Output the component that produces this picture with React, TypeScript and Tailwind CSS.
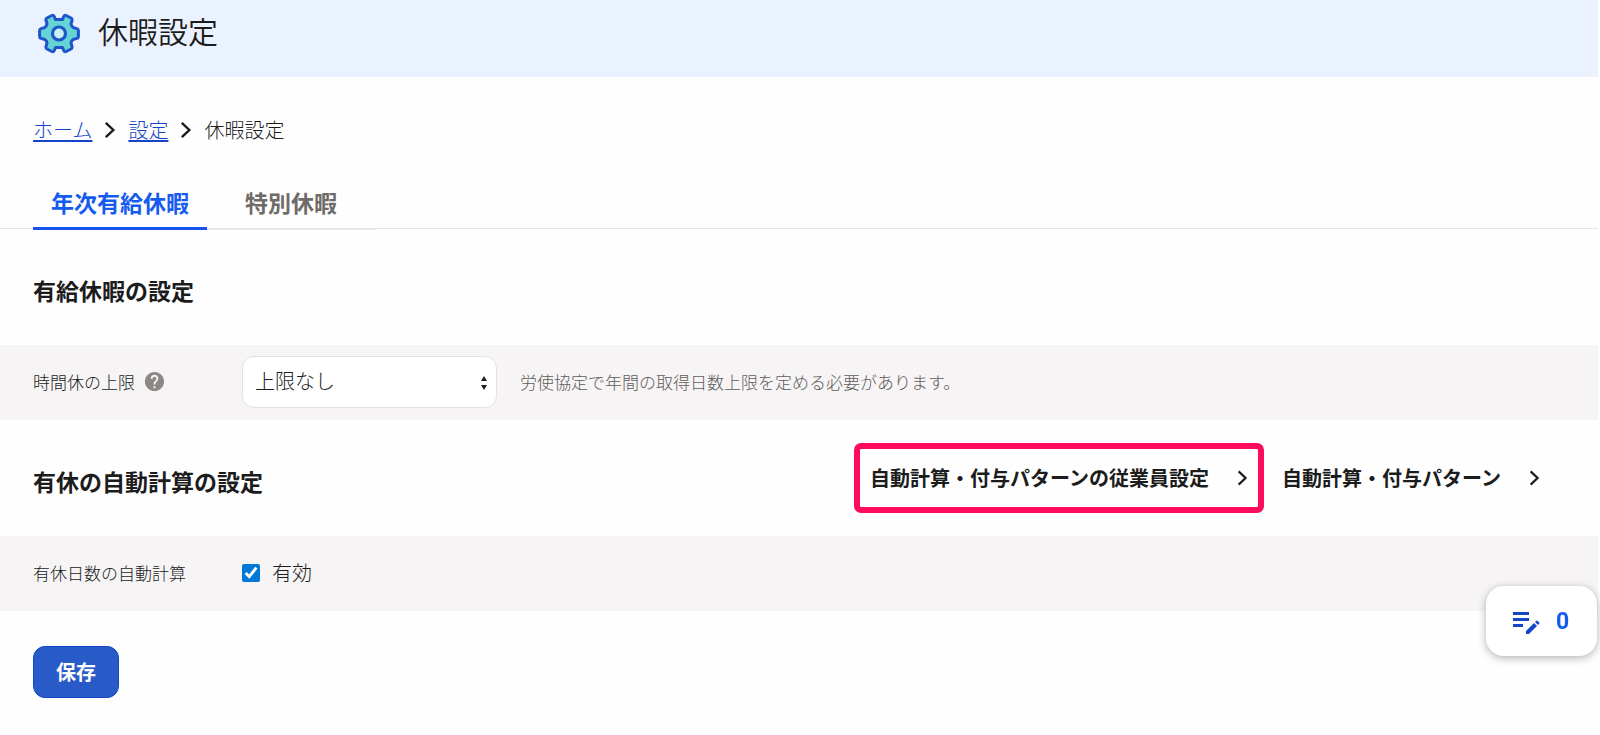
import React from "react";
import { MdHelp } from "react-icons/md";

function Chevron({ className }: { className: string }) {
  return (
    <svg viewBox="0 0 10 16" className={className} fill="none" stroke="currentColor" aria-hidden="true">
      <path d="M1.5 2 L7.8 8 L1.5 14" />
    </svg>
  );
}

function GearIcon() {
  return (
    <svg viewBox="0 0 42 42" className="h-[42px] w-[42px] shrink-0" aria-hidden="true">
      <path
        d="M17.6 6.6 L16.2 3.4 Q15.4 1.8 13.8 2.5 L9 5 Q7.6 5.9 8 7.5 L9 11 Q8.6 13.6 6.2 14.8 L3 15.6 Q1.6 16 1.6 17.6 L1.6 23.4 Q1.6 25 3 25.4 L6.2 26.2 Q8.6 27.4 9 30 L8 33.5 Q7.6 35.1 9 36 L13.8 38.5 Q15.4 39.2 16.2 37.6 L17.6 34.4 H24.4 L25.8 37.6 Q26.6 39.2 28.2 38.5 L33 36 Q34.4 35.1 34 33.5 L33 30 Q33.4 27.4 35.8 26.2 L39 25.4 Q40.4 25 40.4 23.4 L40.4 17.6 Q40.4 16 39 15.6 L35.8 14.8 Q33.4 13.6 33 11 L34 7.5 Q34.4 5.9 33 5 L28.2 2.5 Q26.6 1.8 25.8 3.4 L24.4 6.6 Z"
        fill="#66d3d5"
        stroke="#1f55cb"
        strokeWidth="3"
        strokeLinejoin="round"
      />
      <circle cx="21" cy="20.5" r="6.5" fill="#c9f1f0" stroke="#1f55cb" strokeWidth="3.2" />
    </svg>
  );
}

function NoteIcon() {
  return (
    <svg viewBox="0 0 28 24" className="h-6 w-7 shrink-0" aria-hidden="true">
      <g fill="#1448c8">
        <path d="M1 2h16v3H1zM1 8h16v3H1zM1 14h10v3H1z" />
        <path d="M14 21 L22 13 L25 16 L17 24 H14 Z" />
        <path d="M23 12 L24.3 10.8 Q25 10.3 25.7 10.9 L27.2 12.4 Q27.7 13 27.2 13.7 L26 15 Z" />
      </g>
    </svg>
  );
}

const linkBase = "flex h-[70px] items-center gap-7 rounded-[7px] border-6 px-2.5 text-[20px] font-bold";
const crumbLink = "text-[#1544c8] underline decoration-2 underline-offset-2";

export default function App() {
  return (
    <div className="min-h-screen bg-[#fefefe] pr-0.5 font-['Noto_Sans_CJK_JP',sans-serif] text-[#1c1c1c]">
      <header className="flex h-[77px] items-start gap-[18px] bg-[#eaf2ff] pt-[13px] pl-[38px]">
        <GearIcon />
        <h1 className="text-[30px] leading-[34px] font-[350]">休暇設定</h1>
      </header>

      <nav aria-label="breadcrumb" className="px-[33px] pt-[38px]">
        <ol className="flex items-center gap-3 text-[20px] leading-[30px] font-light">
          <li>
            <a href="#" className={crumbLink}>ホーム</a>
          </li>
          <li><Chevron className="h-5 w-3 stroke-[2]" /></li>
          <li>
            <a href="#" className={crumbLink}>設定</a>
          </li>
          <li><Chevron className="h-5 w-3 stroke-[2]" /></li>
          <li>休暇設定</li>
        </ol>
      </nav>

      <div role="tablist" className="mt-[30px] flex h-[54px] border-b border-[#e6e6e6] px-[33px]">
        <button role="tab" aria-selected="true" className="-mb-0.5 border-b-3 border-[#1553ee] px-[18px] pt-0.5 text-[23px] font-bold text-[#155bf0]">
          年次有給休暇
        </button>
        <button role="tab" aria-selected="false" className="-mb-0.5 border-b-2 border-[#e6e6e6] px-[38px] pt-0.5 text-[23px] font-bold text-[#6e6b68]">
          特別休暇
        </button>
      </div>

      <main>
        <div className="flex h-[116px] items-center px-[33px]">
          <h2 className="pt-1.5 text-[23px] font-bold">有給休暇の設定</h2>
        </div>
        <div className="flex h-[75px] items-center bg-[#f6f4f5] px-[33px] pb-0.5">
          <div className="flex w-[209px] shrink-0 items-center gap-2 text-[17px] font-light">
            <label htmlFor="limit">時間休の上限</label>
            <MdHelp className="h-[23px] w-[23px] text-[#8b8986]" aria-hidden="true" />
          </div>
          <div className="relative w-[255px] shrink-0">
            <select
              id="limit"
              className="block h-[52px] w-full appearance-none rounded-xl border border-[#e4e2e2] bg-white px-3 pb-0.5 text-[20px] font-light"
            >
              <option>上限なし</option>
            </select>
            <svg viewBox="0 0 6 14" className="pointer-events-none absolute top-5 right-2.5 h-3.5 w-1.5" aria-hidden="true">
              <path d="M3 0 L6 5 H0 Z M3 14 L6 9 H0 Z" fill="#1c1c1c" />
            </svg>
          </div>
          <p className="ml-[23px] text-[17px] font-light text-[#5f5c5a]">労使協定で年間の取得日数上限を定める必要があります。</p>
        </div>

        <div className="flex h-[116px] items-center justify-between pr-[42px] pl-[33px]">
          <h2 className="pt-1.5 text-[23px] font-bold">有休の自動計算の設定</h2>
          <div className="flex gap-0.5">
            <a href="#" className={`${linkBase} border-[#ff0a5c]`}>
              自動計算・付与パターンの従業員設定
              <Chevron className="h-[18px] w-[11px] stroke-2" />
            </a>
            <a href="#" className={`${linkBase} border-transparent`}>
              自動計算・付与パターン
              <Chevron className="h-[18px] w-[11px] stroke-2" />
            </a>
          </div>
        </div>
        <div className="flex h-[75px] items-center bg-[#f6f4f5] px-[33px] pb-0.5">
          <div className="w-[209px] shrink-0 text-[17px] font-light">有休日数の自動計算</div>
          <label className="flex items-center gap-3 text-[20px] font-light">
            <input type="checkbox" defaultChecked className="h-[18px] w-[18px] accent-[#0078d7]" />
            有効
          </label>
        </div>

        <div className="px-[33px] pt-[35px]">
          <button className="h-[52px] rounded-xl border border-[#1246c4] bg-[#285ac8] px-[22px] text-[20px] font-bold text-white">
            保存
          </button>
        </div>
      </main>

      <button className="fixed right-[3px] bottom-[79px] flex h-[70px] w-[111px] items-center justify-center gap-4 rounded-[18px] bg-white pt-0.5 pr-0.5 text-[#155bf0] shadow-[0_2px_8px_rgba(0,0,0,0.3)]">
        <NoteIcon />
        <span className="font-['Roboto',sans-serif] text-[23px] font-bold">0</span>
      </button>
    </div>
  );
}
